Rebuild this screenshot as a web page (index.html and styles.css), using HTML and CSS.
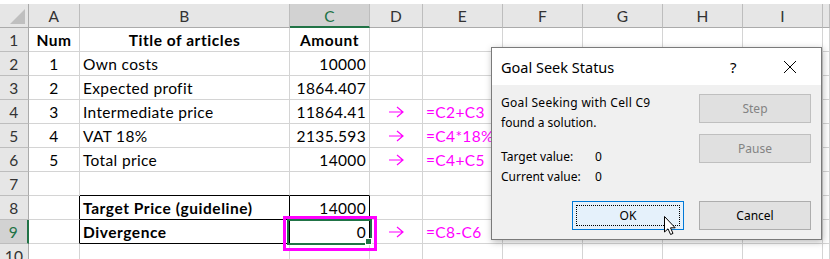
FILE: index.html
```html
<!DOCTYPE html>
<html>
<head>
<meta charset="utf-8">
<title>Goal Seek</title>
<link rel="stylesheet" href="styles.css">
</head>
<body>
<div class="sheet">
  <div class="grid">
    <div class="corner"><span class="tri"></span></div>
    <div class="colh">A</div>
    <div class="colh">B</div>
    <div class="colh on">C</div>
    <div class="colh">D</div>
    <div class="colh">E</div>
    <div class="colh">F</div>
    <div class="colh">G</div>
    <div class="colh">H</div>
    <div class="colh">I</div>
    <div class="colh"></div>

    <div class="rowh">1</div>
    <div class="c mid b">Num</div>
    <div class="c mid b">Title of articles</div>
    <div class="c mid b">Amount</div>
    <div class="c"></div><div class="c"></div><div class="c"></div><div class="c"></div><div class="c"></div><div class="c"></div><div class="c"></div>

    <div class="rowh">2</div>
    <div class="c mid">1</div>
    <div class="c">Own costs</div>
    <div class="c num">10000</div>
    <div class="c"></div><div class="c"></div><div class="c"></div><div class="c"></div><div class="c"></div><div class="c"></div><div class="c"></div>

    <div class="rowh">3</div>
    <div class="c mid">2</div>
    <div class="c">Expected profit</div>
    <div class="c num">1864.407</div>
    <div class="c"></div><div class="c"></div><div class="c"></div><div class="c"></div><div class="c"></div><div class="c"></div><div class="c"></div>

    <div class="rowh">4</div>
    <div class="c mid">3</div>
    <div class="c">Intermediate price</div>
    <div class="c num">11864.41</div>
    <div class="c mid"><svg class="arrow" width="16" height="12" viewBox="0 0 16 12"><path d="M1 6H15M9 1L15 6L9 11"/></svg></div>
    <div class="c fx">=C2+C3</div>
    <div class="c"></div><div class="c"></div><div class="c"></div><div class="c"></div><div class="c"></div>

    <div class="rowh">5</div>
    <div class="c mid">4</div>
    <div class="c">VAT 18%</div>
    <div class="c num">2135.593</div>
    <div class="c mid"><svg class="arrow" width="16" height="12" viewBox="0 0 16 12"><path d="M1 6H15M9 1L15 6L9 11"/></svg></div>
    <div class="c fx">=C4*18%</div>
    <div class="c"></div><div class="c"></div><div class="c"></div><div class="c"></div><div class="c"></div>

    <div class="rowh">6</div>
    <div class="c mid">5</div>
    <div class="c">Total price</div>
    <div class="c num">14000</div>
    <div class="c mid"><svg class="arrow" width="16" height="12" viewBox="0 0 16 12"><path d="M1 6H15M9 1L15 6L9 11"/></svg></div>
    <div class="c fx">=C4+C5</div>
    <div class="c"></div><div class="c"></div><div class="c"></div><div class="c"></div><div class="c"></div>

    <div class="rowh">7</div>
    <div class="c"></div>
    <div class="c kb"></div>
    <div class="c kb"></div>
    <div class="c"></div><div class="c"></div><div class="c"></div><div class="c"></div><div class="c"></div><div class="c"></div><div class="c"></div>

    <div class="rowh">8</div>
    <div class="c kr"></div>
    <div class="c b box">Target Price (guideline)</div>
    <div class="c num box">14000</div>
    <div class="c"></div><div class="c"></div><div class="c"></div><div class="c"></div><div class="c"></div><div class="c"></div><div class="c"></div>

    <div class="rowh on">9</div>
    <div class="c kr"></div>
    <div class="c b box">Divergence</div>
    <div class="c num box sel">0<span class="mark"></span><span class="handle"></span></div>
    <div class="c mid"><svg class="arrow" width="16" height="12" viewBox="0 0 16 12"><path d="M1 6H15M9 1L15 6L9 11"/></svg></div>
    <div class="c fx">=C8-C6</div>
    <div class="c"></div><div class="c"></div><div class="c"></div><div class="c"></div><div class="c"></div>

    <div class="rowh">10</div>
    <div class="c"></div><div class="c"></div><div class="c"></div><div class="c"></div><div class="c"></div><div class="c"></div><div class="c"></div><div class="c"></div><div class="c"></div><div class="c"></div>
  </div>

  <div class="dialog">
    <div class="dlg-title">
      <span class="dlg-name">Goal Seek Status</span>
      <span class="dlg-help">?</span>
      <svg class="dlg-close" width="14" height="14" viewBox="0 0 14 14"><path d="M1 1L13 13M13 1L1 13"/></svg>
    </div>
    <div class="dlg-body">
      <div class="dlg-top">
        <div class="dlg-msg">
          <div class="wide">Goal Seeking with Cell C9</div>
          <div>found a solution.</div>
          <div class="dlg-vals">
            <div class="val"><span class="lbl">Target value:</span><span>0</span></div>
            <div class="val"><span class="lbl">Current value:</span><span>0</span></div>
          </div>
        </div>
        <div class="dlg-side">
          <div class="btn off">Step</div>
          <div class="btn off">Pause</div>
        </div>
      </div>
      <div class="dlg-foot">
        <div class="btn def"><span class="focus">OK</span>
          <svg class="cursor" width="14" height="21" viewBox="0 0 14 21"><path d="M1.5 1.5V17L5 13.8L7.6 19.5L10 18.4L7.5 12.8H12.2Z"/></svg>
        </div>
        <div class="btn">Cancel</div>
      </div>
    </div>
  </div>
</div>
</body>
</html>
```

FILE: styles.css
```css
html,body {
  margin: 0;
  padding: 0;
  background: #fff;
  overflow: hidden;
}
.sheet {
  position: relative;
  width: 830px;
  height: 259px;
  overflow: hidden;
  font-family: Lato, "Liberation Sans", sans-serif;
  font-size: 15.5px;
  letter-spacing: 0.35px;
  color: #000;
}
.grid {
  display: grid;
  grid-template-columns: 29px 51px 210px 80px 53px 80px 80px 80px 80px 80px 1fr;
  grid-auto-rows: 24px;
  margin-top: 4px;
}
.grid > div {
  box-sizing: border-box;
  display: flex;
  align-items: center;
  padding: 1px 3px 0;
  white-space: nowrap;
  border-right: 1px solid #d4d4d4;
  border-bottom: 1px solid #d4d4d4;
}
/* headers */
.grid > .corner,.grid > .colh,.grid > .rowh {
  background: #e6e6e6;
  color: #333;
  justify-content: center;
  border-right-color: #bdbdbd;
  border-bottom-color: #bdbdbd;
}
.grid > .colh {
  border-bottom-color: #ababab;
}
.grid > .corner {
  position: relative;
  border-bottom-color: #ababab;
  border-right-color: #ababab;
}
.tri {
  position: absolute;
  right: 3px;
  bottom: 3px;
  width: 0;
  height: 0;
  border-left: 15px solid transparent;
  border-bottom: 15px solid #bfbfbf;
}
.grid > .rowh {
  border-right-color: #ababab;
  padding: 1px 0 0;
}
.grid > .colh.on {
  background: #d2d2d2;
  color: #217346;
  border-bottom: 2px solid #217346;
}
.grid > .rowh.on {
  background: #d2d2d2;
  color: #217346;
  border-right: 2px solid #217346;
}
/* cells */
.grid > .mid { justify-content: center; }
.grid > .num { justify-content: flex-end; }
.b {
  font-weight: bold;
  letter-spacing: 0.55px;
}
.fx {
  color: #ff00ff;
  overflow: visible;
}
.arrow path {
  fill: none;
  stroke: #ff00ff;
  stroke-width: 1.2;
}
.grid > .kb { border-bottom-color: #000; }
.grid > .kr { border-right-color: #000; }
.grid > .box {
  border-right-color: #000;
  border-bottom-color: #000;
}
.grid > .sel {
  position: relative;
}
.sel::after {
  content: "";
  position: absolute;
  top: -1px;
  left: -3px;
  right: -3px;
  bottom: -2px;
  border: 2px solid #217346;
}
.mark {
  position: absolute;
  top: -4px;
  left: -7px;
  right: -8px;
  bottom: -8px;
  border: 3px solid #ff00ff;
}
.handle {
  position: absolute;
  right: -3px;
  bottom: -2px;
  width: 5px;
  height: 5px;
  background: #217346;
  border: 1px solid #fff;
  z-index: 2;
}
/* dialog */
.dialog {
  position: absolute;
  left: 491px;
  top: 47px;
  width: 331px;
  height: 193px;
  box-sizing: border-box;
  border: 1px solid #7a7a7a;
  background: #f0f0f0;
  box-shadow: 1px 2px 7px rgba(0,0,0,0.28);
  display: flex;
  flex-direction: column;
  font-family: "Noto Sans", "Open Sans", sans-serif;
  font-size: 12px;
  letter-spacing: 0;
  color: #000;
}
.dlg-title {
  height: 37px;
  background: #fff;
  display: flex;
  align-items: center;
  padding-left: 9px;
}
.dlg-name {
  font-size: 14.5px;
  flex: 1;
}
.dlg-help {
  font-size: 15px;
  width: 10px;
  margin-right: 43px;
}
.dlg-close {
  margin-right: 24px;
}
.dlg-close path {
  stroke: #000;
  stroke-width: 1;
  fill: none;
}
.dlg-body {
  flex: 1;
  display: flex;
  flex-direction: column;
  padding: 8px 10px 9px 9px;
}
.dlg-top {
  display: flex;
  justify-content: space-between;
}
.dlg-msg {
  line-height: 20px;
}
.wide {
  letter-spacing: 0.3px;
}
.dlg-vals {
  margin-top: 14px;
}
.val .lbl {
  display: inline-block;
  width: 94px;
}
.dlg-side {
  display: flex;
  flex-direction: column;
  gap: 11px;
  padding-top: 1px;
}
.btn {
  position: relative;
  box-sizing: border-box;
  width: 112px;
  height: 29px;
  border: 1px solid #adadad;
  background: #e1e1e1;
  display: flex;
  align-items: center;
  justify-content: center;
}
.btn.off {
  background: #e0e0e0;
  border-color: #bfbfbf;
  color: #838383;
}
.btn.def {
  background: #e5f1fb;
  border-color: #0078d7;
}
.focus {
  position: absolute;
  inset: 3px;
  border: 1px dotted #000;
  display: flex;
  align-items: center;
  justify-content: center;
}
.dlg-foot {
  margin-top: auto;
  display: flex;
  justify-content: flex-end;
  gap: 15px;
}
.cursor {
  position: absolute;
  left: 90px;
  top: 13px;
}
.cursor path {
  fill: #fff;
  stroke: #000;
  stroke-width: 1;
  stroke-linejoin: miter;
}
```
